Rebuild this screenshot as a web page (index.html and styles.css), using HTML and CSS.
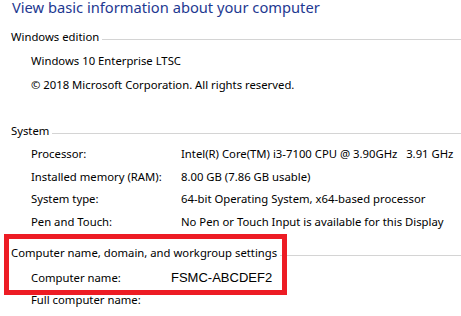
FILE: index.html
```html
<!DOCTYPE html>
<html lang="en">
<head>
  <meta charset="UTF-8">
  <title>System</title>
  <link rel="stylesheet" href="styles.css">
</head>
<body>
  <h1 class="title">View basic information about your computer</h1>

  <div class="group edition">
    <div class="group-head"><span>Windows edition</span></div>
    <div class="row"><span class="label">Windows 10 Enterprise LTSC</span></div>
    <div class="row"><span class="label">© 2018 Microsoft Corporation. All rights reserved.</span></div>
  </div>

  <div class="group system">
    <div class="group-head"><span>System</span></div>
    <div class="row"><span class="label">Processor:</span><span class="value">Intel(R) Core(TM) i3-7100 CPU @ 3.90GHz&nbsp;&nbsp; 3.91 GHz</span></div>
    <div class="row"><span class="label">Installed memory (RAM):</span><span class="value">8.00 GB (7.86 GB usable)</span></div>
    <div class="row"><span class="label">System type:</span><span class="value">64-bit Operating System, x64-based processor</span></div>
    <div class="row"><span class="label">Pen and Touch:</span><span class="value">No Pen or Touch Input is available for this Display</span></div>
  </div>

  <div class="group computer">
    <div class="group-head"><span>Computer name, domain, and workgroup settings</span></div>
    <div class="row first"><span class="label">Computer name:</span><span class="value pc-name">FSMC-ABCDEF2</span></div>
    <div class="row"><span class="label">Full computer name:</span></div>
    <div class="highlight"></div>
  </div>
</body>
</html>
```

FILE: styles.css
```css
body {
  margin: 0;
  background: #ffffff;
  color: #000000;
  font-family: "Noto Sans", "Open Sans", sans-serif;
  font-size: 11.3px;
  overflow: hidden;
}
.title {
  margin: -3px 0 0 12px;
  font-size: 14.7px;
  line-height: 20px;
  font-weight: normal;
  color: #1e3991;
  white-space: nowrap;
}
.group {
  position: relative;
}
.group-head {
  display: flex;
  align-items: flex-start;
  height: 22px;
  line-height: 22px;
  padding-left: 11px;
  white-space: nowrap;
}
.group-head::after {
  content: '';
  flex: 1;
  margin: 13px 0 0 3px;
  border-top: 1px solid #d4d4d4;
}
.row {
  display: flex;
  padding-left: 31px;
  white-space: nowrap;
}
.label {
  width: 150px;
  flex: none;
}
.edition {
  margin-top: 9px;
}
.edition .group-head {
  margin-bottom: 1px;
}
.edition .row {
  height: 24px;
  line-height: 24px;
}
.system {
  margin-top: 23px;
}
.system .group-head {
  margin-bottom: 1px;
}
.system .row {
  height: 22.5px;
  line-height: 22.5px;
}
.computer {
  margin-top: 9px;
}
.computer .row {
  height: 22px;
  line-height: 22px;
}
.computer .row.first {
  margin-top: 3px;
}
.pc-name {
  margin-left: -10px;
  font-family: "Liberation Sans", Arial, sans-serif;
  font-size: 13px;
}
.highlight {
  position: absolute;
  left: 4px;
  top: -8px;
  width: 283px;
  height: 61px;
  box-sizing: border-box;
  border: 5px solid #ed1c24;
}
```
